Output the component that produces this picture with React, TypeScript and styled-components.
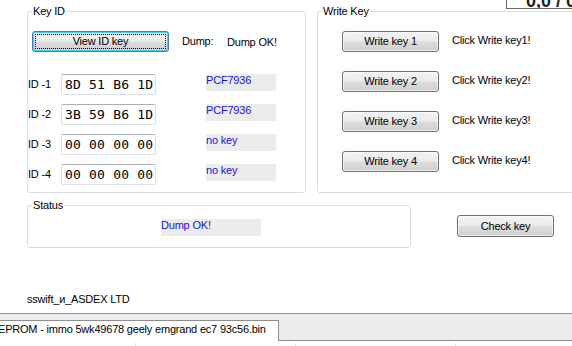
import styled, { createGlobalStyle } from 'styled-components';

const GlobalStyle = createGlobalStyle`
  html, body {
    margin: 0;
    padding: 0;
    background: #ffffff;
  }
  body {
    font-family: "Liberation Sans", Arial, sans-serif;
    font-size: 11px;
    letter-spacing: -0.2px;
    color: #000000;
  }
`

const Window = styled.div`
  position: relative;
  width: 572px;
  height: 346px;
  overflow: hidden;
  background: #ffffff;
`

const Main = styled.div`
  height: 313px;
  box-sizing: border-box;
  padding: 5px 0 0 27px;
  display: flex;
  flex-direction: column;
`

const TopRow = styled.div`
  display: flex;
  gap: 11px;
`

const BottomRow = styled.div`
  display: flex;
  align-items: flex-start;
  margin-top: 6px;
`

const GroupBox = styled.fieldset<{ $w: number; $h: number }>`
  margin: 0;
  padding: 0;
  min-width: 0;
  flex: none;
  box-sizing: border-box;
  width: ${p => p.$w}px;
  height: ${p => p.$h}px;
  border: 1px solid #d5dfe5;
  border-radius: 3px;
`

const Legend = styled.legend`
  margin-left: 4px;
  padding: 0 1px;
  font-size: 11px;
  line-height: 13px;
`

const KeyIdBody = styled.div`
  padding-top: 13px;
  display: flex;
  flex-direction: column;
`

const DumpRow = styled.div`
  display: flex;
  align-items: center;
  margin-left: 4px;
  height: 21px;
`

const DumpLabel = styled.span`
  width: 45px;
  margin-left: 13px;
  line-height: 13px;
`

const IdList = styled.div`
  margin-top: 22px;
  display: flex;
  flex-direction: column;
  gap: 9px;
`

const IdRow = styled.div`
  display: flex;
  align-items: flex-start;
  height: 21px;
`

const IdLabel = styled.span`
  width: 33px;
  line-height: 21px;
`

const HexBox = styled.div`
  box-sizing: border-box;
  width: 95px;
  height: 21px;
  padding-left: 3px;
  border: 1px solid #dbdfe6;
  border-top-color: #abadb3;
  border-radius: 2px;
  font-family: "DejaVu Sans Mono", "Liberation Mono", monospace;
  font-size: 13px;
  letter-spacing: 0.2px;
  line-height: 19px;
  white-space: pre;
`

const InfoBox = styled.div<{ $w: number; $ml: number }>`
  width: ${p => p.$w}px;
  height: 17px;
  margin-left: ${p => p.$ml}px;
  background: #ececec;
  color: #1414e0;
  line-height: 13px;
`

const WriteBody = styled.div`
  padding: 13px 0 0 24px;
  display: flex;
  flex-direction: column;
  gap: 19px;
`

const WriteRow = styled.div`
  display: flex;
  align-items: center;
  height: 21px;
`

const WriteHint = styled.span`
  margin-left: 13px;
  margin-top: -3px;
  line-height: 13px;
`

const StatusBody = styled.div`
  padding: 7px 0 0 133px;
`

const Button = styled.button<{ $w: number; $h: number; $focus?: boolean }>`
  flex: none;
  box-sizing: border-box;
  width: ${p => p.$w}px;
  height: ${p => p.$h}px;
  margin: 0;
  padding: 0;
  font-family: "Liberation Sans", Arial, sans-serif;
  font-size: 11px;
  letter-spacing: -0.2px;
  line-height: 13px;
  color: #000000;
  border: 1px solid ${p => (p.$focus ? '#3c7fb1' : '#707070')};
  border-radius: 3px;
  background: linear-gradient(#f2f2f2 0%, #ebebeb 48%, #dddddd 52%, #cfcfcf 100%);
  box-shadow: inset 0 0 0 1px ${p => (p.$focus ? '#48d0f5' : 'rgba(255,255,255,0.6)')};
  outline: ${p => (p.$focus ? '1px dotted #000000' : 'none')};
  outline-offset: -4px;
`

const CheckButton = styled(Button)`
  margin: 16px 0 0 46px;
`

const Credit = styled.div`
  margin-top: auto;
  margin-bottom: 7px;
  line-height: 13px;
`

const StatusStrip = styled.div`
  height: 28px;
  box-sizing: border-box;
  border-top: 1px solid #8e8e8e;
  border-bottom: 1px solid #8e8e8e;
  background: #ececec;
  display: flex;
  align-items: flex-end;
`

const FileTab = styled.div`
  box-sizing: border-box;
  width: 279px;
  height: 21px;
  margin-bottom: -1px;
  background: #ffffff;
  border-top: 1px solid #8e8e8e;
  border-right: 1px solid #8e8e8e;
  padding-top: 2px;
  line-height: 13px;
  white-space: nowrap;
  overflow: hidden;
  text-indent: -2px;
`

const Ticks = styled.div`
  display: grid;
  grid-template-columns: 136px 160px 160px 1fr;
  height: 3px;
  margin-top: 2px;
`

const Tick = styled.div`
  border-right: 1px solid #e2e2e2;
`

const Counter = styled.div`
  position: absolute;
  top: 0;
  left: 506px;
  width: 80px;
  height: 9px;
  box-sizing: border-box;
  border-left: 1px solid #6a6a6a;
  border-bottom: 1px solid #6a6a6a;
  overflow: hidden;
  padding-left: 19px;
`

const CounterText = styled.div`
  margin-top: -8px;
  font-size: 18px;
  line-height: 18px;
  letter-spacing: 0;
  font-weight: bold;
  color: #222222;
  white-space: pre;
`

const ids = [
  { label: 'ID -1', hex: '8D 51 B6 1D', type: 'PCF7936' },
  { label: 'ID -2', hex: '3B 59 B6 1D', type: 'PCF7936' },
  { label: 'ID -3', hex: '00 00 00 00', type: 'no key' },
  { label: 'ID -4', hex: '00 00 00 00', type: 'no key' },
]

const writes = [1, 2, 3, 4]

export default function App() {
  return (
    <>
      <GlobalStyle />
      <Window>
        <Main>
          <TopRow>
            <GroupBox $w={279} $h={188}>
              <Legend>Key ID</Legend>
              <KeyIdBody>
                <DumpRow>
                  <Button $w={137} $h={21} $focus>View ID key</Button>
                  <DumpLabel>Dump:</DumpLabel>
                  <span>Dump OK!</span>
                </DumpRow>
                <IdList>
                  {ids.map(id => (
                    <IdRow key={id.label}>
                      <IdLabel>{id.label}</IdLabel>
                      <HexBox>{id.hex}</HexBox>
                      <InfoBox $w={70} $ml={50}>{id.type}</InfoBox>
                    </IdRow>
                  ))}
                </IdList>
              </KeyIdBody>
            </GroupBox>
            <GroupBox $w={280} $h={188}>
              <Legend>Write Key</Legend>
              <WriteBody>
                {writes.map(n => (
                  <WriteRow key={n}>
                    <Button $w={97} $h={21}>Write key {n}</Button>
                    <WriteHint>Click Write key{n}!</WriteHint>
                  </WriteRow>
                ))}
              </WriteBody>
            </GroupBox>
          </TopRow>
          <BottomRow>
            <GroupBox $w={384} $h={49}>
              <Legend>Status</Legend>
              <StatusBody>
                <InfoBox $w={100} $ml={0}>Dump OK!</InfoBox>
              </StatusBody>
            </GroupBox>
            <CheckButton $w={97} $h={22}>Check key</CheckButton>
          </BottomRow>
          <Credit>sswift_и_ASDEX LTD</Credit>
        </Main>
        <StatusStrip>
          <FileTab>EPROM - immo 5wk49678 geely emgrand ec7 93c56.bin</FileTab>
        </StatusStrip>
        <Ticks>
          <Tick />
          <Tick />
          <Tick />
          <div />
        </Ticks>
        <Counter>
          <CounterText>0,0 / 0</CounterText>
        </Counter>
      </Window>
    </>
  )
}
